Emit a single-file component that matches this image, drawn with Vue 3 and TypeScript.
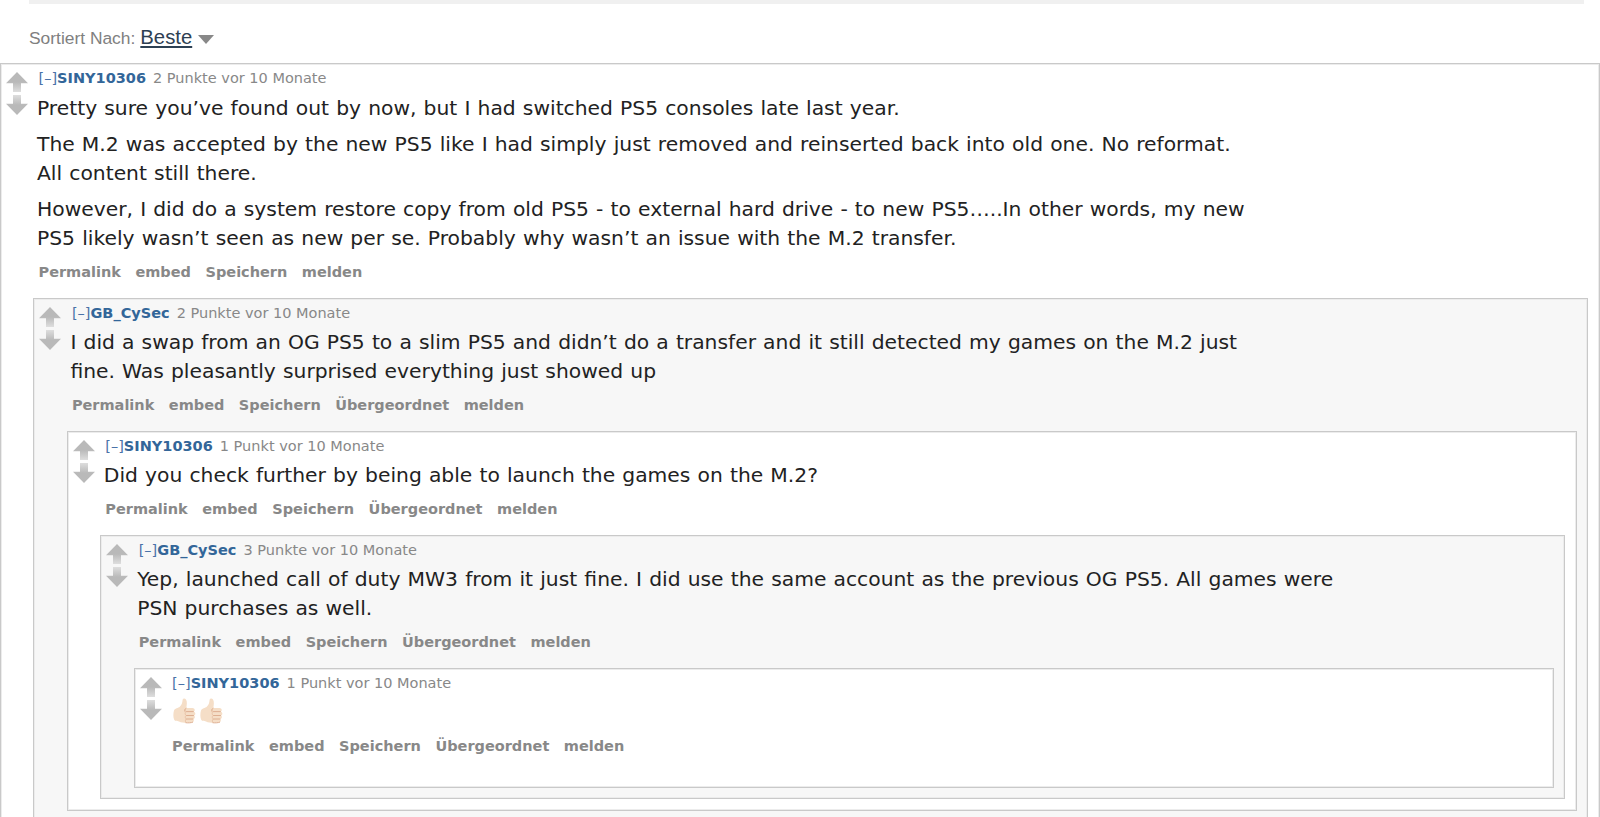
<script setup lang="ts">
interface Comment {
  author: string
  meta: string
  paragraphs: string[]
  thumbs?: number
  actions: string[]
  reply?: Comment
}

const props = defineProps<{ comment?: Comment; depth?: number }>()

const replyActions = ['Permalink', 'embed', 'Speichern', 'Übergeordnet', 'melden']

const thread: Comment = {
  author: 'SINY10306',
  meta: '2 Punkte vor 10 Monate',
  paragraphs: [
    'Pretty sure you’ve found out by now, but I had switched PS5 consoles late last year.',
    'The M.2 was accepted by the new PS5 like I had simply just removed and reinserted back into old one. No reformat. All content still there.',
    'However, I did do a system restore copy from old PS5 - to external hard drive - to new PS5…..In other words, my new PS5 likely wasn’t seen as new per se. Probably why wasn’t an issue with the M.2 transfer.',
  ],
  actions: ['Permalink', 'embed', 'Speichern', 'melden'],
  reply: {
    author: 'GB_CySec',
    meta: '2 Punkte vor 10 Monate',
    paragraphs: [
      'I did a swap from an OG PS5 to a slim PS5 and didn’t do a transfer and it still detected my games on the M.2 just fine. Was pleasantly surprised everything just showed up',
    ],
    actions: replyActions,
    reply: {
      author: 'SINY10306',
      meta: '1 Punkt vor 10 Monate',
      paragraphs: ['Did you check further by being able to launch the games on the M.2?'],
      actions: replyActions,
      reply: {
        author: 'GB_CySec',
        meta: '3 Punkte vor 10 Monate',
        paragraphs: [
          'Yep, launched call of duty MW3 from it just fine. I did use the same account as the previous OG PS5. All games were PSN purchases as well.',
        ],
        actions: replyActions,
        reply: {
          author: 'SINY10306',
          meta: '1 Punkt vor 10 Monate',
          paragraphs: [],
          thumbs: 2,
          actions: replyActions,
        },
      },
    },
  },
}

const depth = props.depth ?? 0
</script>

<template>
  <main v-if="!comment" class="page">
    <div class="top-rule"></div>
    <div class="sort">
      <span class="sort-label">Sortiert Nach:</span>
      <a class="sort-value">Beste</a>
      <svg class="caret" width="16" height="9" viewBox="0 0 16 9"><path d="M0 0H16L8 9Z" fill="#888" /></svg>
    </div>
    <App :comment="thread" :depth="0" />
  </main>

  <article v-else class="comment" :class="{ nested: depth > 0, shaded: depth % 2 === 1 }">
    <div class="row">
      <div class="votes">
        <svg width="22" height="20" viewBox="0 0 22 20">
          <defs>
            <linearGradient id="fade" x1="0" y1="0" x2="0" y2="1">
              <stop offset="0.5" stop-color="#b9b9b9" />
              <stop offset="1" stop-color="#dedede" />
            </linearGradient>
          </defs>
          <path d="M11 0L22 11.3H15V20H7V11.3H0Z" fill="url(#fade)" />
        </svg>
        <svg class="down" width="22" height="20" viewBox="0 0 22 20">
          <path d="M11 0L22 11.3H15V20H7V11.3H0Z" fill="url(#fade)" />
        </svg>
      </div>
      <div class="entry">
        <p class="tagline">
          <a class="toggle">[–]</a>
          <a class="author">{{ comment.author }}</a>
          <span>{{ comment.meta }}</span>
        </p>
        <div class="body">
          <p v-for="text in comment.paragraphs" :key="text">{{ text }}</p>
          <p v-if="comment.thumbs" class="emoji">
            <svg v-for="n in comment.thumbs" :key="n" width="23" height="26" viewBox="0 0 23 26">
              <path
                d="M1 12.5C2 10 5 10.5 7 8.5C9 6.500 9.300 4.500 9.600 2C9.800 .2 12 0 13 1.500C14.400 3.600 13.800 7 13.300 10H19.500C22 10 22.500 13 20.700 13.700C23 14.300 22.800 17.200 20.900 17.500C22.500 18.300 22 20.800 20.300 21C21.500 22 20.800 24.500 18.500 24.600C14 25 9 25 6 23.400C4 22.500 2.500 23.500 1.300 22C0 19.500 .2 15 1 12.500Z"
                fill="#f5dec7" />
              <path d="M13.300 10C12 11 11.500 12 11.700 13.500M13 13.600H20.700M13 17.500H20.900M13 21H20.300M12.500 24.700C15 25 18.500 24.900 20 24" fill="none" stroke="#dba98b" stroke-width="0.9" />
              <path d="M13 10.500C11.300 11.500 12 13.500 13.200 13.600C11.700 14.400 11.900 17 13.200 17.500C11.900 18.300 12 20.500 13.200 21C12.200 21.800 12 23.800 13.200 24.600" fill="none" stroke="#e5bd9f" stroke-width="0.8" />
            </svg>
          </p>
        </div>
        <div class="actions">
          <a v-for="action in comment.actions" :key="action">{{ action }}</a>
        </div>
      </div>
    </div>
    <App v-if="comment.reply" :comment="comment.reply" :depth="depth + 1" />
  </article>
</template>

<style>
body {
  margin: 0;
  background: #fff;
  overflow: hidden;
}
</style>

<style scoped>
.page {
  width: 1600px;
  height: 817px;
  overflow: hidden;
  font-family: "DejaVu Sans", sans-serif;
}
.top-rule {
  height: 4px;
  margin: 0 16px 0 29px;
  background: #f0f0f0;
}
.sort {
  display: flex;
  align-items: baseline;
  height: 43px;
  padding: 16px 0 0 29px;
  box-sizing: content-box;
  font-family: "Liberation Sans", Arial, sans-serif;
  color: #808080;
}
.sort-label {
  font-size: 17.4px;
  line-height: 36px;
}
.sort-value {
  margin-left: 5px;
  font-size: 20.3px;
  color: #2d4053;
  text-decoration: underline;
  text-decoration-thickness: 2px;
  text-underline-offset: 2px;
}
.caret {
  align-self: flex-start;
  margin: 15px 0 0 6px;
}
.comment {
  box-sizing: border-box;
  border: 1px solid #c9c9c9;
  box-shadow: inset 0 0 0 1px #ececec;
  background: #fff;
  padding-bottom: 10.6px;
}
.comment.nested {
  margin-left: 32.4px;
  margin-right: 10.6px;
}
.comment.shaded {
  background: #f7f7f7;
}
.comment:not(:has(.comment)) {
  padding-bottom: 15.4px;
}
.row {
  display: flex;
}
.votes {
  display: flex;
  flex-direction: column;
  gap: 3px;
  width: 22px;
  margin: 8px 9px 0 5px;
}
.votes svg {
  display: block;
}
.down {
  transform: rotate(180deg);
}
.tagline {
  margin: 0;
  padding: 3px 0 0 1.500px;
  height: 26px;
  box-sizing: border-box;
  font-size: 14.500px;
  line-height: 23px;
  color: #888;
  white-space: nowrap;
}
.toggle {
  color: #4a72a8;
}
.author {
  margin: 0 7px 0 0;
  color: #369;
  font-weight: bold;
}
.body {
  width: 1217px;
  padding-top: 3.5px;
  font-size: 20.300px;
  line-height: 29px;
  word-spacing: 0.034em;
  color: #222;
}
.body p {
  margin: 0 0 7.250px;
}
.emoji {
  display: flex;
  gap: 4px;
  height: 29px;
  padding-left: 2px;
}
.actions {
  display: flex;
  gap: 14.500px;
  height: 36.250px;
  padding: 1px 0 0 1.500px;
  font-size: 14.500px;
  font-weight: bold;
  line-height: 23px;
  color: #888;
}
</style>
